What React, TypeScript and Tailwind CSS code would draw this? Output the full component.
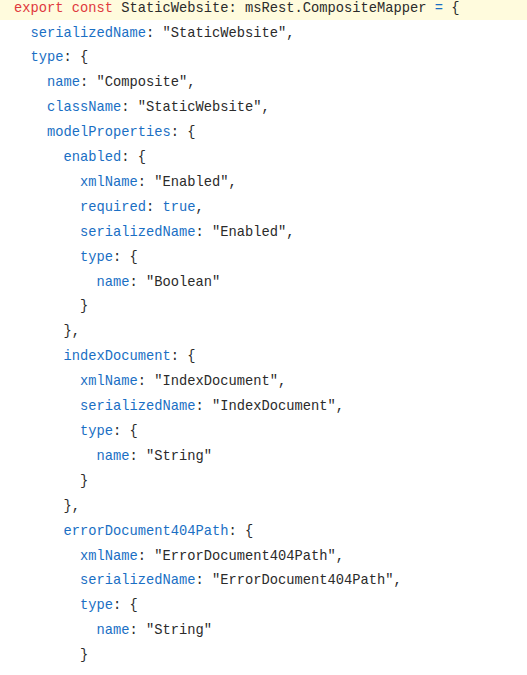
import React from "react";

type Tok = [string, string];
const K = "text-[#e0393e]";
const P = "text-[#1a6fc4]";
const T = "text-[#2b2b2b]";

const lines: { indent: number; toks: Tok[] }[] = [
  { indent: 0, toks: [[K, "export const"], [T, " StaticWebsite: msRest.CompositeMapper "], [P, "="], [T, " {"]] },
  { indent: 1, toks: [[P, "serializedName"], [T, ": \"StaticWebsite\","]] },
  { indent: 1, toks: [[P, "type"], [T, ": {"]] },
  { indent: 2, toks: [[P, "name"], [T, ": \"Composite\","]] },
  { indent: 2, toks: [[P, "className"], [T, ": \"StaticWebsite\","]] },
  { indent: 2, toks: [[P, "modelProperties"], [T, ": {"]] },
  { indent: 3, toks: [[P, "enabled"], [T, ": {"]] },
  { indent: 4, toks: [[P, "xmlName"], [T, ": \"Enabled\","]] },
  { indent: 4, toks: [[P, "required"], [T, ": "], [P, "true"], [T, ","]] },
  { indent: 4, toks: [[P, "serializedName"], [T, ": \"Enabled\","]] },
  { indent: 4, toks: [[P, "type"], [T, ": {"]] },
  { indent: 5, toks: [[P, "name"], [T, ": \"Boolean\""]] },
  { indent: 4, toks: [[T, "}"]] },
  { indent: 3, toks: [[T, "},"]] },
  { indent: 3, toks: [[P, "indexDocument"], [T, ": {"]] },
  { indent: 4, toks: [[P, "xmlName"], [T, ": \"IndexDocument\","]] },
  { indent: 4, toks: [[P, "serializedName"], [T, ": \"IndexDocument\","]] },
  { indent: 4, toks: [[P, "type"], [T, ": {"]] },
  { indent: 5, toks: [[P, "name"], [T, ": \"String\""]] },
  { indent: 4, toks: [[T, "}"]] },
  { indent: 3, toks: [[T, "},"]] },
  { indent: 3, toks: [[P, "errorDocument404Path"], [T, ": {"]] },
  { indent: 4, toks: [[P, "xmlName"], [T, ": \"ErrorDocument404Path\","]] },
  { indent: 4, toks: [[P, "serializedName"], [T, ": \"ErrorDocument404Path\","]] },
  { indent: 4, toks: [[P, "type"], [T, ": {"]] },
  { indent: 5, toks: [[P, "name"], [T, ": \"String\""]] },
  { indent: 4, toks: [[T, "}"]] },
];

function Line({ indent, toks }: { indent: number; toks: Tok[] }) {
  return (
    <div className="whitespace-pre">
      {"  ".repeat(indent)}
      {toks.map(([c, t], i) => (
        <span key={i} className={c}>
          {t}
        </span>
      ))}
    </div>
  );
}

export default function App() {
  const [first, ...rest] = lines;
  return (
    <div className="w-[527px] h-[675px] overflow-hidden bg-white font-['Liberation_Mono',monospace] text-[13.75px]">
      <div className="h-[20px] leading-[18px] bg-[#fffbdd] pl-[14px]">
        <Line {...first} />
      </div>
      <div className="pt-[1.5px] pl-[14px] leading-[24.9px]">
        {rest.map((l, i) => (
          <Line key={i} {...l} />
        ))}
      </div>
    </div>
  );
}
